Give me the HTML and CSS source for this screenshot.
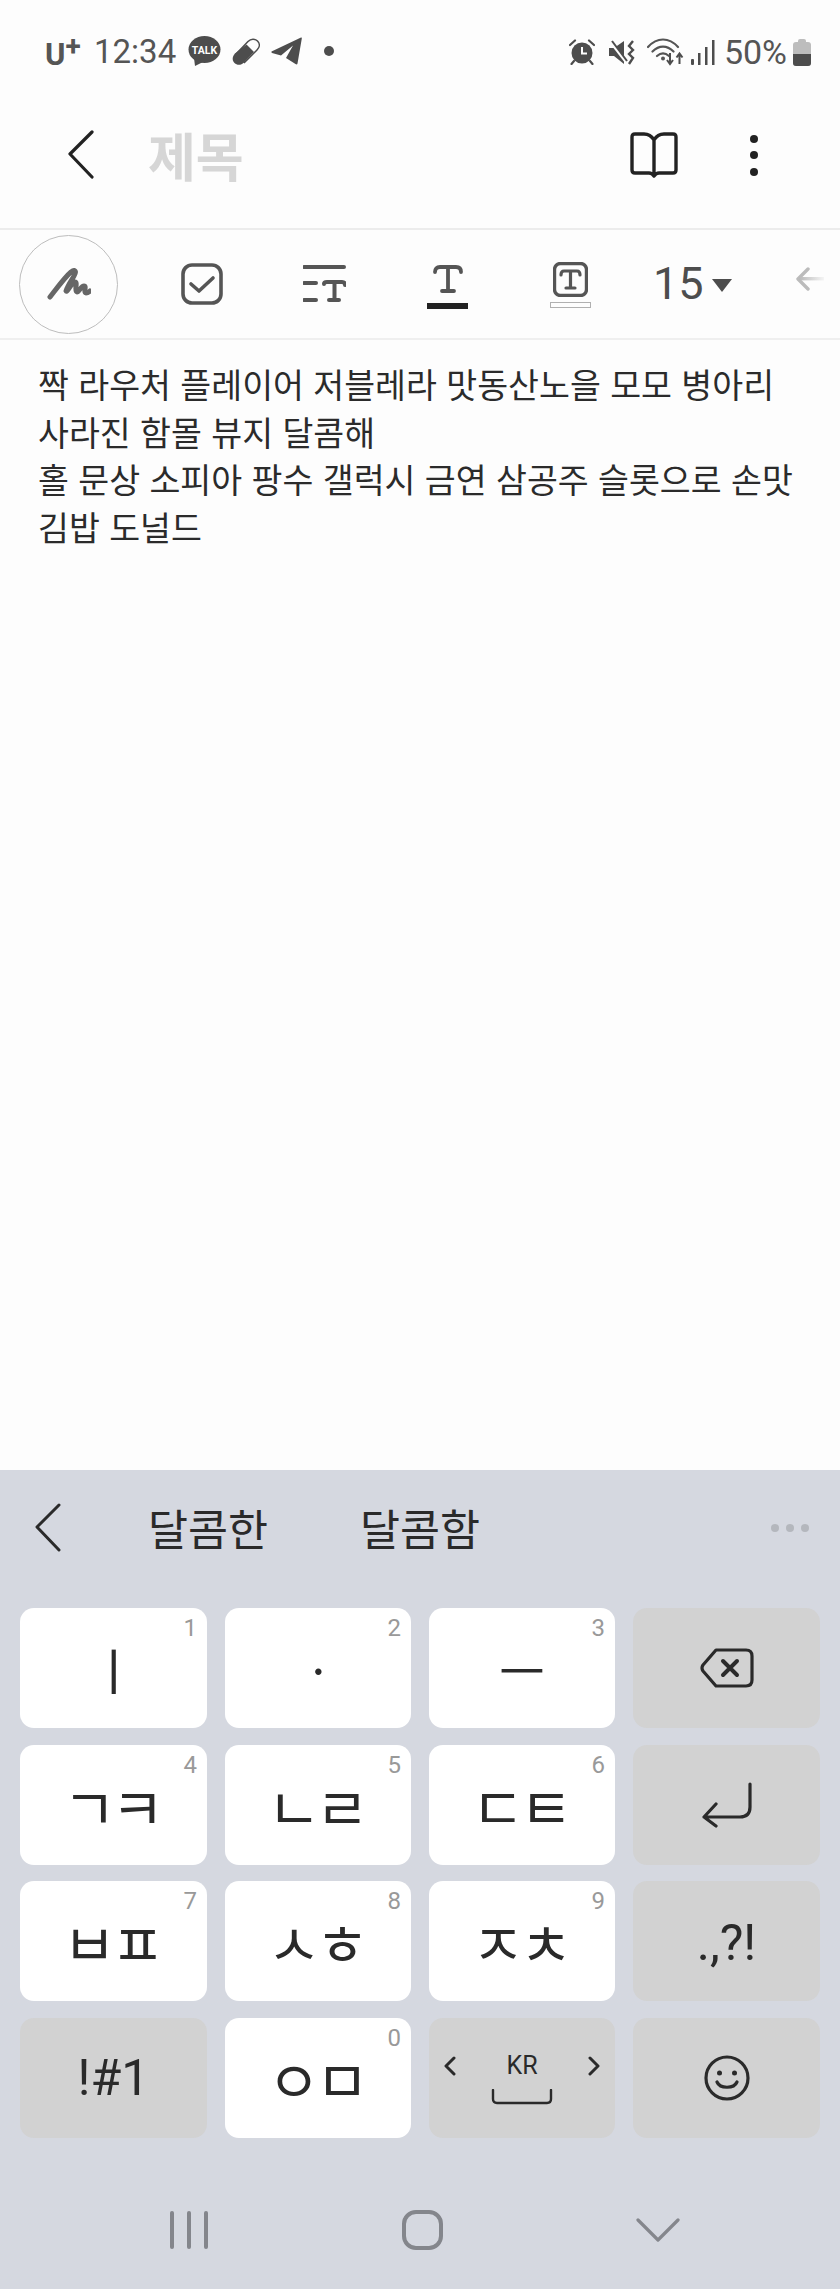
FILE: index.html
```html
<!DOCTYPE html>
<html lang="ko">
<head>
  <meta charset="UTF-8" />
  <title>제목</title>
  <link rel="stylesheet" href="styles.css">
</head>
<body>
  <div class="status-bar">
    <span class="carrier">U<sup>+</sup></span>
    <span class="clock">12:34</span>
    <div class="notif-icons">
      <svg width="33" height="30" viewBox="0 0 33 30"><ellipse cx="16.5" cy="13.5" rx="16" ry="13.5" fill="#4d4d4d"/><path d="M6 22L7 30L15 26Z" fill="#4d4d4d"/><text x="16.5" y="18" class="talk" text-anchor="middle">TALK</text></svg>
      <svg width="28" height="29" viewBox="0 0 28 29"><path d="M4 17L16 4.5C19 1.5 23 1.5 25.5 4S28 10 25 13L12.500 25.500Z" fill="#fdfdfd" stroke="#4d4d4d" stroke-width="1.500"/><path d="M14.500 7.500L22 15L12 25.500C9 28.500 5 28.500 2.500 26S0 19.500 3 16.500Z" fill="#4d4d4d"/></svg>
      <svg width="31" height="28" viewBox="0 0 31 28"><path d="M.5 14.500L30 .5Q31 0 30.800 1.500L26.500 26.500Q26 28 24.500 27L15 21L22 8.500L10 18.500L1 16Q0 15 .5 14.500Z" fill="#4d4d4d"/></svg>
      <span class="notif-dot"></span>
    </div>
    <div class="sys-icons">
      <svg class="alarm" width="26" height="26" viewBox="0 0 26 26"><circle cx="13" cy="14" r="10.500" fill="#4d4d4d"/><path d="M13 8V14.500H18" fill="none" stroke="#fdfdfd" stroke-width="2"/><path d="M1 6L6 1.500M25 6L20 1.500M5 22L2.500 25M21 22L23.500 25" stroke="#4d4d4d" stroke-width="2.200" stroke-linecap="round"/></svg>
      <svg class="mute" width="26" height="25" viewBox="0 0 26 25"><path d="M0 8H5L15 1V24L5 16H0Z" fill="#4d4d4d"/><path d="M1 1L18 23" stroke="#fdfdfd" stroke-width="3"/><path d="M3 1L18 21" stroke="#4d4d4d" stroke-width="2"/><path d="M24 1L20 6L24 10L20 14L24 18L20 24" fill="none" stroke="#4d4d4d" stroke-width="2.400"/></svg>
      <svg class="wifi" width="37" height="28" viewBox="0 0 37 28"><path d="M1 9C10 -1 22 -1 31 9M5.500 13.500C12 7 20 7 26.500 13.500M10 18C14 14.500 18 14.500 22 18" fill="none" stroke="#555" stroke-width="2.200" stroke-linecap="round"/><circle cx="16" cy="20.500" r="2" fill="#555"/><path d="M23 15V25M20 22L23 26L26 22M32.500 26V16M29.500 19.500L32.500 15.500L35.500 19.500" fill="none" stroke="#4d4d4d" stroke-width="2"/></svg>
      <svg class="signal" width="24" height="25" viewBox="0 0 24 25"><rect x="0" y="19" width="3" height="6" rx="1" fill="#4d4d4d"/><rect x="7" y="13" width="2.500" height="12" fill="#4d4d4d"/><rect x="14" y="7" width="2.500" height="18" fill="#4d4d4d"/><rect x="21" y="0" width="2.500" height="25" fill="#4d4d4d"/></svg>
      <span class="battery-text">50%</span>
      <div class="battery"><div class="battery-cap"></div><div class="battery-body"><div class="battery-level" style="height:47%"></div></div></div>
    </div>
  </div>

  <div class="app-bar">
    <svg class="back" width="26" height="50" viewBox="0 0 26 50"><path d="M24 2L2 24L24 47" fill="none" stroke="#222" stroke-width="3.200" stroke-linecap="round" stroke-linejoin="round"/></svg>
    <span class="title">제목</span>
    <svg class="book" width="48" height="46" viewBox="0 0 48 46"><path d="M24 8C21 3 18 2 14 2H5Q2 2 2 5V38Q2 41 5 41H19Q22 41 24 44Q26 41 29 41H43Q46 41 46 38V5Q46 2 43 2H34C30 2 27 3 24 8ZM24 8V42" fill="none" stroke="#222" stroke-width="3.400" stroke-linejoin="round"/></svg>
    <div class="more"><i></i><i></i><i></i></div>
  </div>

  <div class="toolbar">
    <div class="pen-circle">
      <svg width="44" height="32" viewBox="0 0 44 32"><path d="M3 29C10 20 18 9 24 4C28 1 30 3 27 8C24 13 20 19 19 23C20 25 24 15 28 14C31 14 27 23 30 24C32 24 34 18 37 18C40 18 36 24 39 25C41 25 42 24 43 23" fill="none" stroke="#666" stroke-width="5" stroke-linecap="round" stroke-linejoin="round"/></svg>
    </div>
    <svg class="tool check" width="42" height="42" viewBox="0 0 42 42"><rect x="2" y="2" width="38" height="38" rx="9" fill="none" stroke="#555" stroke-width="3.600"/><path d="M10 21L18 28L32 15" fill="none" stroke="#555" stroke-width="3.600" stroke-linecap="round" stroke-linejoin="round"/></svg>
    <svg class="tool lines" width="43" height="38" viewBox="0 0 43 38"><path d="M1 2H41M1 18H13M1 35H13M21 19Q21 17 24 17H39Q42 17 42 20M31.500 17V35M26 35H36" fill="none" stroke="#555" stroke-width="4" stroke-linecap="round"/></svg>
    <div class="tool tool-col text-color">
      <svg width="30" height="28" viewBox="0 0 30 28"><path d="M2 7Q2 2 7 2H23Q28 2 28 7M15 2V26M9 26H21" fill="none" stroke="#555" stroke-width="3.800" stroke-linecap="round"/></svg>
      <div class="color-bar dark"></div>
    </div>
    <div class="tool tool-col bg-color">
      <svg width="35" height="35" viewBox="0 0 35 35"><rect x="1.500" y="1.500" width="32" height="32" rx="6" fill="none" stroke="#555" stroke-width="3.400"/><path d="M8 13Q8 9 11 9H24Q27 9 27 13M17.500 9V26M13 26H22" fill="none" stroke="#555" stroke-width="3.200" stroke-linecap="round"/></svg>
      <div class="color-bar empty"></div>
    </div>
    <div class="tool size"><span>15</span><i class="caret"></i></div>
    <svg class="tool undo" width="28" height="24" viewBox="0 0 28 24"><defs><linearGradient id="fade"><stop offset="0" stop-color="#b8b8b8"/><stop offset="1" stop-color="#f5f5f5"/></linearGradient></defs><path d="M12 2L2 12L12 22" fill="none" stroke="#bbb" stroke-width="3.400" stroke-linecap="round" stroke-linejoin="round"/><rect x="3" y="10" width="25" height="3.400" fill="url(#fade)"/></svg>
  </div>

  <div class="editor">
    짝 라우처 플레이어 저블레라 맛동산노을 모모 병아리<br>
    사라진 함몰 뷰지 달콤해<br>
    홀 문상 소피아 팡수 갤럭시 금연 삼공주 슬롯으로 손맛<br>
    김밥 도널드
  </div>

  <div class="keyboard">
    <div class="suggest">
      <svg class="suggest-back" width="26" height="50" viewBox="0 0 26 50"><path d="M24 2L2 24L24 47" fill="none" stroke="#2a2a2a" stroke-width="3" stroke-linecap="round" stroke-linejoin="round"/></svg>
      <span class="word">달콤한</span>
      <span class="word">달콤함</span>
      <div class="suggest-more"><i></i><i></i><i></i></div>
    </div>
    <div class="keys">
      <div class="key"><sup class="num">1</sup><span class="jamo vowel">ㅣ</span></div>
      <div class="key"><sup class="num">2</sup><span class="jamo vowel">ㆍ</span></div>
      <div class="key"><sup class="num">3</sup><span class="jamo vowel">ㅡ</span></div>
      <div class="key fn">
        <svg width="54" height="40" viewBox="0 0 54 40"><path d="M16 2H46Q52 2 52 8V32Q52 38 46 38H16L3 23Q1 20 3 17Z" fill="none" stroke="#2a2a2a" stroke-width="3.200" stroke-linejoin="round"/><path d="M23 13L37 27M37 13L23 27" stroke="#2a2a2a" stroke-width="4" stroke-linecap="round"/></svg>
      </div>
      <div class="key"><sup class="num">4</sup><span class="jamo">ㄱㅋ</span></div>
      <div class="key"><sup class="num">5</sup><span class="jamo">ㄴㄹ</span></div>
      <div class="key"><sup class="num">6</sup><span class="jamo">ㄷㅌ</span></div>
      <div class="key fn">
        <svg width="52" height="46" viewBox="0 0 52 46"><path d="M49 2V25Q49 35 39 35H3M15 22L3 35L15 44" fill="none" stroke="#2a2a2a" stroke-width="3.200" stroke-linecap="round" stroke-linejoin="round"/></svg>
      </div>
      <div class="key"><sup class="num">7</sup><span class="jamo">ㅂㅍ</span></div>
      <div class="key"><sup class="num">8</sup><span class="jamo">ㅅㅎ</span></div>
      <div class="key"><sup class="num">9</sup><span class="jamo">ㅈㅊ</span></div>
      <div class="key fn"><span class="punct">.,?!</span></div>
      <div class="key fn"><span class="symbols">!#1</span></div>
      <div class="key"><sup class="num">0</sup><span class="jamo">ㅇㅁ</span></div>
      <div class="key fn space">
        <div class="lang-row">
          <svg width="12" height="20" viewBox="0 0 12 20"><path d="M10 2L2 10L10 18" fill="none" stroke="#2a2a2a" stroke-width="3" stroke-linecap="round" stroke-linejoin="round"/></svg>
          <span class="lang">KR</span>
          <svg width="12" height="20" viewBox="0 0 12 20"><path d="M2 2L10 10L2 18" fill="none" stroke="#2a2a2a" stroke-width="3" stroke-linecap="round" stroke-linejoin="round"/></svg>
        </div>
        <svg class="space-mark" width="62" height="16" viewBox="0 0 62 16"><path d="M2 1V10Q2 14 6 14H56Q60 14 60 10V1" fill="none" stroke="#2a2a2a" stroke-width="2.400" stroke-linecap="round"/></svg>
      </div>
      <div class="key fn">
        <svg width="46" height="46" viewBox="0 0 46 46"><circle cx="23" cy="23" r="21" fill="none" stroke="#2a2a2a" stroke-width="3.200"/><circle cx="15.500" cy="18" r="2.500" fill="#2a2a2a"/><circle cx="30.500" cy="18" r="2.500" fill="#2a2a2a"/><path d="M13 27C16 34 30 34 33 27" fill="none" stroke="#2a2a2a" stroke-width="3.200" stroke-linecap="round"/></svg>
      </div>
    </div>
    <div class="nav-bar">
      <div class="nav-recents"><i></i><i></i><i></i></div>
      <div class="nav-home"></div>
      <svg width="44" height="26" viewBox="0 0 44 26"><path d="M2 3L22 23L42 3" fill="none" stroke="#84868c" stroke-width="3.200" stroke-linecap="round" stroke-linejoin="round"/></svg>
    </div>
  </div>
</body>
</html>
```

FILE: styles.css
```css
* {
  box-sizing: border-box;
}
body {
  margin: 0;
  width: 840px;
  height: 2289px;
  display: flex;
  flex-direction: column;
  background: #fdfdfd;
  font-family: 'Noto Sans CJK KR', sans-serif;
  overflow: hidden;
}

/* status bar */
.status-bar {
  height: 100px;
  padding: 36px 29px 0 45px;
  display: flex;
  align-items: flex-start;
  font-family: Roboto, sans-serif;
  color: #555;
}
.carrier {
  font-size: 31px;
  font-weight: 700;
  line-height: 32px;
  margin-top: 3px;
  width: 49px;
}
.carrier sup {
  font-size: 28px;
  line-height: 0;
  vertical-align: 9px;
}
.clock {
  font-size: 33px;
  line-height: 32px;
  width: 94px;
}
.notif-icons {
  display: flex;
  align-items: center;
  gap: 11px;
}
.talk {
  font-family: Roboto, sans-serif;
  font-size: 10.500px;
  font-weight: 700;
  fill: #fdfdfd;
}
.notif-dot {
  width: 10px;
  height: 10px;
  border-radius: 50%;
  background: #4d4d4d;
  margin-left: 11px;
}
.sys-icons {
  margin-left: auto;
  display: flex;
  align-items: center;
}
.alarm { margin-right: 14px; }
.mute { margin-right: 12px; }
.wifi { margin-right: 7px; }
.signal { margin-right: 9px; }
.battery-text {
  font-size: 34px;
  line-height: 32px;
  margin-right: 6px;
}
.battery {
  width: 18px;
  display: flex;
  flex-direction: column;
  align-items: center;
}
.battery-cap {
  width: 8px;
  height: 3px;
  background: #bdbdbd;
  border-radius: 2px 2px 0 0;
}
.battery-body {
  width: 18px;
  height: 24px;
  background: #bdbdbd;
  border-radius: 3px;
  display: flex;
  align-items: flex-end;
  overflow: hidden;
}
.battery-level {
  width: 100%;
  background: #4d4d4d;
}

/* app bar */
.app-bar {
  height: 128px;
  padding: 0 0 18px 68px;
  display: flex;
  align-items: center;
}
.title {
  margin-left: 54px;
  font-size: 52px;
  font-weight: 700;
  line-height: 60px;
  color: #d6d6d6;
}
.book {
  margin-left: auto;
}
.more {
  width: 8px;
  margin: 0 82px 0 72px;
  display: flex;
  flex-direction: column;
  gap: 8.500px;
}
.more i {
  width: 8px;
  height: 8px;
  border-radius: 50%;
  background: #222;
}

/* toolbar */
.toolbar {
  height: 112px;
  border-top: 2px solid #ececec;
  border-bottom: 2px solid #efefef;
  background: #fdfdfd;
  padding-left: 19px;
  display: flex;
  align-items: center;
  position: relative;
}
.pen-circle {
  width: 99px;
  height: 99px;
  border: 1px solid #bdbdbd;
  border-radius: 50%;
  display: flex;
  align-items: center;
  justify-content: center;
}
.check { margin-left: 63px; }
.lines { margin-left: 80px; margin-top: -1px; }
.tool-col {
  display: flex;
  flex-direction: column;
  align-items: center;
  justify-content: space-between;
  width: 41px;
}
.text-color { margin-left: 81px; height: 44px; margin-top: 6px; }
.bg-color { margin-left: 82px; height: 46px; margin-top: 2px; }
.color-bar {
  width: 41px;
  height: 6px;
}
.color-bar.dark { background: #222; }
.color-bar.empty { border: 1px solid #b0b0b0; background: #fdfdfd; }
.size {
  margin-left: 62px;
  display: flex;
  align-items: center;
  font-family: Roboto, sans-serif;
  font-size: 45px;
  line-height: 54px;
  color: #4d4d4d;
}
.caret {
  width: 0;
  height: 0;
  margin-left: 8px;
  margin-top: 2px;
  border-left: 10.500px solid transparent;
  border-right: 10.500px solid transparent;
  border-top: 13px solid #4d4d4d;
}
.undo { margin-left: 64px; margin-top: -10px; }

/* note body */
.editor {
  flex: 1;
  padding: 20px 0 0 38px;
  font-size: 33.600px;
  line-height: 47.500px;
  color: #2b2b2b;
  white-space: nowrap;
}

/* keyboard */
.keyboard {
  height: 819px;
  background: #d5d8e0;
  display: flex;
  flex-direction: column;
}
.suggest {
  height: 138px;
  display: flex;
  align-items: center;
  padding: 0 31px 22px 35px;
  flex-shrink: 0;
}
.word {
  font-size: 43.500px;
  line-height: 50px;
  color: #2a2a2a;
}
.suggest-back + .word { margin-left: 87px; }
.word + .word { margin-left: 92px; }
.suggest-more {
  margin-left: auto;
  display: flex;
  gap: 7px;
}
.suggest-more i {
  width: 8px;
  height: 8px;
  border-radius: 50%;
  background: #b4b7bd;
}
.keys {
  padding: 0 20px;
  display: grid;
  grid-template-columns: 187px 186px 186px 187px;
  grid-auto-rows: 120px;
  column-gap: 18px;
  row-gap: 16.700px;
}
.key {
  position: relative;
  background: #fff;
  border-radius: 14px;
  display: flex;
  flex-direction: column;
  align-items: center;
  justify-content: center;
}
.key.fn {
  background: #d2d2d2;
}
.num {
  position: absolute;
  top: 6px;
  right: 10px;
  font-family: Roboto, sans-serif;
  font-size: 24px;
  line-height: 28px;
  color: #999;
}
.jamo {
  font-size: 58px;
  line-height: 64px;
  color: #2a2a2a;
  letter-spacing: -5px;
  margin-right: 5px;
}
.jamo.vowel {
  font-size: 50px;
}
.punct, .symbols {
  font-family: Roboto, sans-serif;
  font-size: 50px;
  line-height: 54px;
  color: #2a2a2a;
}
.punct { margin-top: 4px; }
.lang-row {
  width: 156px;
  display: flex;
  align-items: center;
  justify-content: space-between;
}
.lang {
  font-family: Roboto, sans-serif;
  font-size: 25px;
  line-height: 30px;
  color: #2a2a2a;
}
.space-mark {
  margin-top: 8px;
}
.nav-bar {
  flex: 1;
  padding: 32px 160px 0 170px;
  display: flex;
  align-items: center;
  justify-content: space-between;
}
.nav-recents {
  display: flex;
  gap: 13px;
}
.nav-recents i {
  width: 4px;
  height: 38px;
  border-radius: 2px;
  background: #84868c;
}
.nav-home {
  width: 41px;
  height: 40px;
  border: 4px solid #84868c;
  border-radius: 14px;
}
```
